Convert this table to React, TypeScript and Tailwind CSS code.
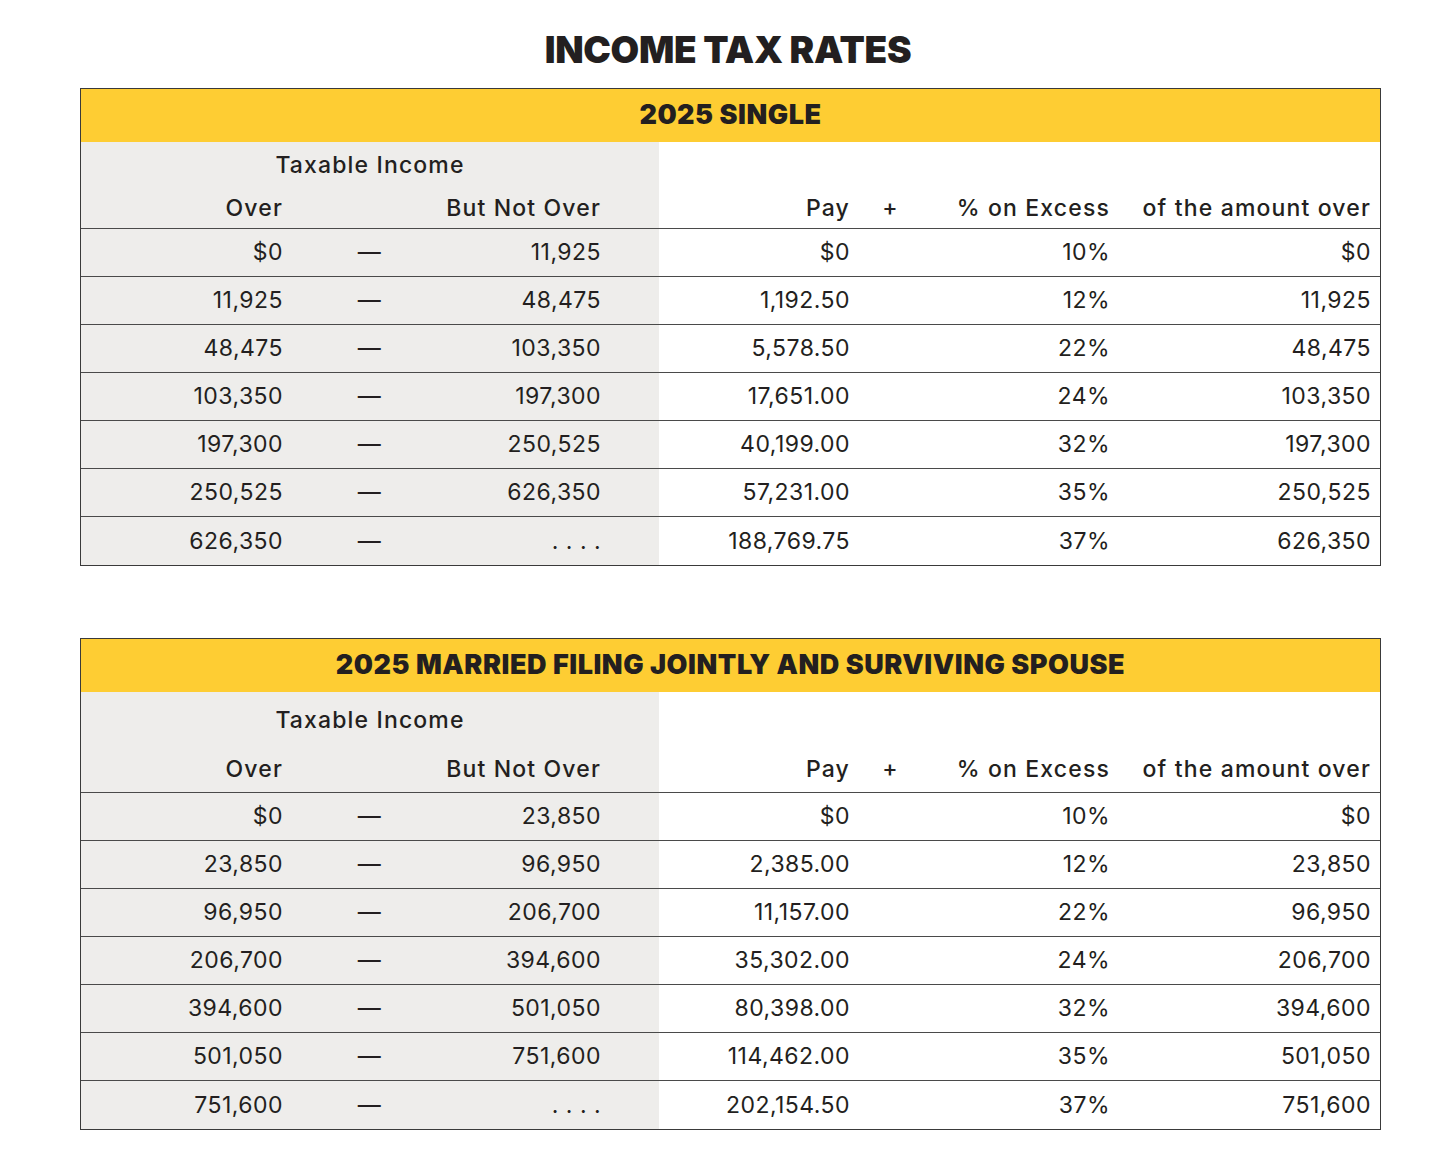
type Row = [string, string, string, string, string]

const single: Row[] = [
  ['$0', '11,925', '$0', '10%', '$0'],
  ['11,925', '48,475', '1,192.50', '12%', '11,925'],
  ['48,475', '103,350', '5,578.50', '22%', '48,475'],
  ['103,350', '197,300', '17,651.00', '24%', '103,350'],
  ['197,300', '250,525', '40,199.00', '32%', '197,300'],
  ['250,525', '626,350', '57,231.00', '35%', '250,525'],
  ['626,350', '. . . .', '188,769.75', '37%', '626,350'],
]

const married: Row[] = [
  ['$0', '23,850', '$0', '10%', '$0'],
  ['23,850', '96,950', '2,385.00', '12%', '23,850'],
  ['96,950', '206,700', '11,157.00', '22%', '96,950'],
  ['206,700', '394,600', '35,302.00', '24%', '206,700'],
  ['394,600', '501,050', '80,398.00', '32%', '394,600'],
  ['501,050', '751,600', '114,462.00', '35%', '501,050'],
  ['751,600', '. . . .', '202,154.50', '37%', '751,600'],
]

const cols = 'grid grid-cols-[260px_57px_261px_202px_59px_201px_261px]'

function TaxTable({ title, rows, tall }: { title: string; rows: Row[]; tall?: boolean }) {
  const pb = tall ? 'pb-[8px]' : 'pb-[5px]'
  return (
    <div className="w-[1301px] border border-[#3a3a3a]">
      <div className="flex h-[53px] items-center justify-center bg-[#fecd33] text-[27px] font-black tracking-[0.02em] text-[#231f20]">
        {title}
      </div>

      {/* column heads */}
      <div className={`${cols} border-b border-[#4a4a4a] text-[23px] leading-[30px] font-medium tracking-[0.05em] text-[#231f20]`}>
        <div className={`col-span-3 flex flex-col bg-[#eeedeb] ${tall ? 'h-[100px]' : 'h-[86px]'}`}>
          <div className={`text-center ${tall ? 'pt-[13px]' : 'pt-[8px]'}`}>Taxable Income</div>
          <div className={`mt-auto grid grid-cols-[260px_57px_261px] ${pb}`}>
            <div className="pr-[58px] text-right">Over</div>
            <div />
            <div className="pr-[58px] text-right">But Not Over</div>
          </div>
        </div>
        <div className={`flex items-end justify-end pr-[11px] ${pb}`}>Pay</div>
        <div className={`flex items-end justify-center ${pb}`}>+</div>
        <div className={`flex items-end justify-end pr-[11px] ${pb}`}>% on Excess</div>
        <div className={`flex items-end justify-end pr-[11px] ${pb}`}>of the amount over</div>
      </div>

      {rows.map((r, i) => (
        <div
          key={i}
          className={`${cols} h-[48px] text-[23px] font-normal tracking-[0.02em] text-[#231f20] ${i < rows.length - 1 ? 'border-b border-[#4a4a4a]' : ''}`}
        >
          <div className="flex items-center justify-end bg-[#eeedeb] pr-[58px]">{r[0]}</div>
          <div className="flex items-center justify-center bg-[#eeedeb]">—</div>
          <div className="flex items-center justify-end bg-[#eeedeb] pr-[58px]">{r[1]}</div>
          <div className="flex items-center justify-end pr-[11px]">{r[2]}</div>
          <div />
          <div className="flex items-center justify-end pr-[11px]">{r[3]}</div>
          <div className="flex items-center justify-end pr-[11px]">{r[4]}</div>
        </div>
      ))}
    </div>
  )
}

export default function App() {
  return (
    <div className="min-h-[1169px] w-[1456px] bg-white font-['Inter','Liberation_Sans',sans-serif]">
      <h1 className="pt-[27px] text-center text-[37px] leading-[46px] font-black tracking-[-0.01em] text-[#231f20]">
        INCOME TAX RATES
      </h1>
      <div className="mt-[15px] flex flex-col gap-[72px] pl-[80px]">
        <TaxTable title="2025 SINGLE" rows={single} />
        <TaxTable title="2025 MARRIED FILING JOINTLY AND SURVIVING SPOUSE" rows={married} tall />
      </div>
    </div>
  )
}
